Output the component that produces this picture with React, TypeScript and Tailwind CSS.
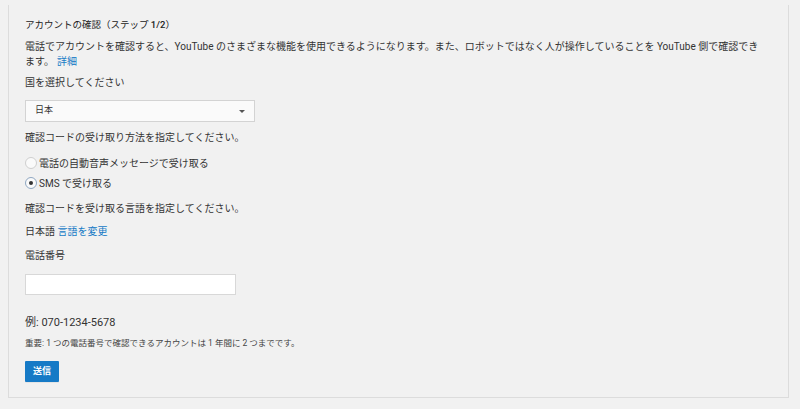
import React from 'react';

const font = "font-['Roboto','Noto_Sans_CJK_JP',sans-serif]";

function Radio({ checked, label }: { checked?: boolean; label: string }) {
  return (
    <label className="flex h-[20px] items-center">
      <span
        className={
          'flex h-[12px] w-[12px] items-center justify-center rounded-full border bg-[#fafafa] ' +
          (checked ? 'border-[#8fa7c2]' : 'border-[#cfcfcf]')
        }
      >
        {checked && <span className="h-[4px] w-[4px] rounded-full bg-[#333]" />}
      </span>
      <span className="ml-[2px] text-[10px] leading-[15px] text-[#333]">{label}</span>
    </label>
  );
}

export default function App() {
  return (
    <div className={`min-h-[409px] bg-[#f1f1f1] pt-[5px] pl-[8px] ${font}`}>
      <div className="w-[781px] border-x border-b border-[#dcdcdc] bg-[#f1f1f1] pl-[16px] pr-[20px] pt-[12px] pb-[15px] text-[#333]">
        <h2 className="text-[9.5px] leading-[16px] font-normal text-[#222]">
          アカウントの確認（ステップ <span className="font-medium">1/2</span>）
        </h2>
        <p className="mt-[6px] text-[10px] leading-[15px]">
          電話でアカウントを確認すると、YouTube のさまざまな機能を使用できるようになります。また、ロボットではなく人が操作していることを YouTube 側で確認できます。
          <a className="ml-[3px] text-[#167ac6]">詳細</a>
        </p>

        <div className="mt-[6px] text-[10px] leading-[15px]">国を選択してください</div>
        <div className="mt-[10px] flex h-[22px] w-[230px] items-center justify-between border border-[#d3d3d3] bg-[#fafafa] pl-[9px] pr-[9px]">
          <span className="text-[9px] text-[#333]">日本</span>
          <span className="h-0 w-0 border-x-[3px] border-t-[3px] border-x-transparent border-t-[#555]" />
        </div>

        <div className="mt-[8px] text-[10px] leading-[15px]">確認コードの受け取り方法を指定してください。</div>
        <div className="mt-[8px]">
          <Radio label="電話の自動音声メッセージで受け取る" />
          <Radio checked label="SMS で受け取る" />
        </div>

        <div className="mt-[8px] text-[10px] leading-[15px]">確認コードを受け取る言語を指定してください。</div>
        <div className="mt-[8px] text-[10px] leading-[15px]">
          日本語 <a className="text-[#167ac6]">言語を変更</a>
        </div>

        <div className="mt-[9px] text-[10px] leading-[15px]">電話番号</div>
        <div className="mt-[11px] h-[21px] w-[211px] border border-[#d8d8d8] bg-white" />

        <div className="mt-[20px] text-[11px] leading-[16px] text-[#333]">例: 070-1234-5678</div>
        <div className="mt-[6px] text-[8.5px] leading-[13px] text-[#444]">
          重要: 1 つの電話番号で確認できるアカウントは 1 年間に 2 つまでです。
        </div>

        <button className="mt-[11px] flex h-[21px] w-[34px] items-center justify-center rounded-[1px] bg-[#167ac6] text-[9px] font-bold text-white shadow-[0_1px_0_rgba(0,0,0,0.05)]">
          送信
        </button>
      </div>
    </div>
  );
}
